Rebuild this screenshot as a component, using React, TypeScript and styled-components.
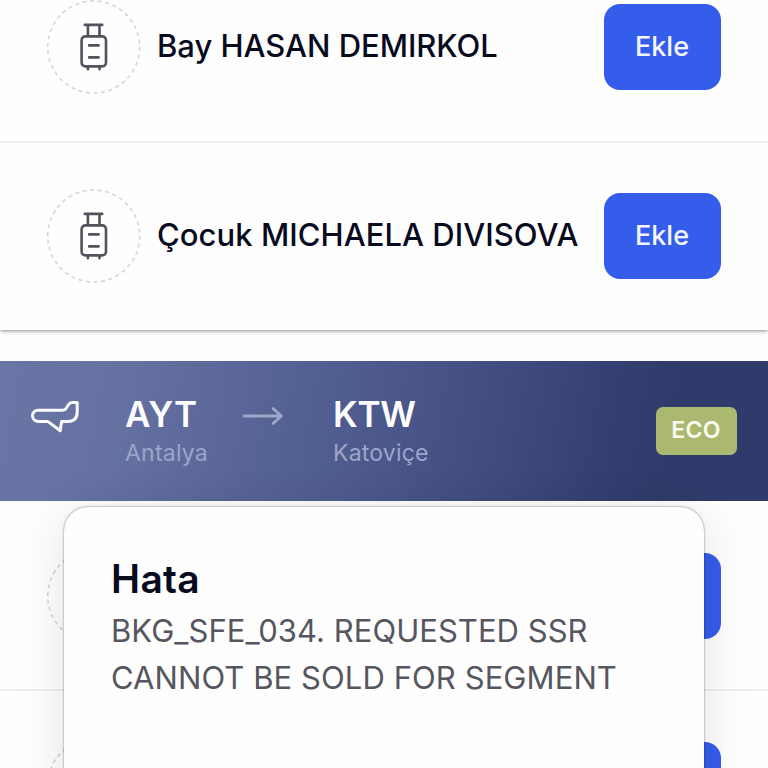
import React from "react";
import styled, { createGlobalStyle } from "styled-components";

interface TextProps {
  $spacing?: string;
}

const GlobalStyle = createGlobalStyle`
  * {
    box-sizing: border-box;
  }
  body {
    margin: 0;
    background: #fefefe;
    font-family: "Inter", "Liberation Sans", sans-serif;
    color: #080a1e;
  }
`;

const StyledPage = styled.div`
  position: relative;
  width: 768px;
  height: 768px;
  overflow: hidden;
  display: flex;
  flex-direction: column;
`;

const StyledCard = styled.section<{ $first?: boolean }>`
  flex: none;
  margin-top: ${(props) => (props.$first ? "-46px" : "1px")};
  margin-bottom: ${(props) => (props.$first ? "31px" : "0")};
  background: #fefefe;
  box-shadow: ${(props) =>
    props.$first ? "0 1px 4px rgba(0, 0, 0, 0.45)" : "none"};
`;

const StyledRow = styled.div<{ $raised?: boolean }>`
  display: flex;
  align-items: center;
  height: 187px;
  padding: 0 47px ${(props) => (props.$raised ? "2px" : "0")};

  & + & {
    height: 189px;
    border-top: 2px solid #efeff1;
  }
`;

const StyledCircle = styled.div`
  flex: none;
  width: 94px;
  height: 94px;
  position: relative;
  display: flex;
  align-items: center;
  justify-content: center;
`;

const StyledRing = styled.svg`
  position: absolute;
  inset: 0;
`;

const StyledName = styled.span<TextProps>`
  flex: 1;
  margin-left: 16px;
  margin-top: -3px;
  font-size: 31px;
  font-weight: 500;
  letter-spacing: ${(props) => props.$spacing || "0"};
  white-space: nowrap;
`;

const StyledButton = styled.button`
  flex: none;
  width: 117px;
  height: 86px;
  padding: 0 1px 1px 0;
  border: none;
  border-radius: 16px;
  background: #355deb;
  color: #f3f6ff;
  font-family: inherit;
  font-size: 27px;
  font-weight: 500;
`;

const StyledBanner = styled.header`
  flex: none;
  display: flex;
  align-items: flex-start;
  height: 140px;
  padding: 0 31px;
  background: linear-gradient(
    100deg,
    #6875a5 0%,
    #6572a2 15%,
    #4c588b 50%,
    #343f71 79%,
    #303b6b 86%,
    #303b6b 100%
  );
`;

const StyledPlane = styled.svg`
  flex: none;
  margin-top: 39px;
`;

const StyledArrow = styled.svg`
  flex: none;
  margin-top: 44px;
`;

const StyledAirport = styled.div<{ $width: number; $left: number }>`
  width: ${(props) => props.$width}px;
  margin-left: ${(props) => props.$left}px;
  margin-top: 32px;
`;

const StyledCode = styled.div<TextProps>`
  font-size: 35px;
  line-height: 42px;
  font-weight: 600;
  letter-spacing: ${(props) => props.$spacing || "0"};
  color: #fdfdff;
`;

const StyledCity = styled.div<TextProps>`
  font-size: 23px;
  line-height: 36px;
  letter-spacing: ${(props) => props.$spacing || "0"};
  color: #9ca6cb;
`;

const StyledBadge = styled.div`
  width: 81px;
  height: 48px;
  margin-left: auto;
  margin-top: 46px;
  padding: 0 1px 2px 0;
  display: flex;
  align-items: center;
  justify-content: center;
  border-radius: 7px;
  background: #aab870;
  color: #fdfdf2;
  font-size: 23px;
  font-weight: 600;
  letter-spacing: 0.3px;
`;

const StyledDialog = styled.div`
  position: absolute;
  top: 507px;
  left: 64px;
  width: 640px;
  height: 340px;
  padding: 48px 47px;
  border-radius: 24px;
  background: #fefefe;
  box-shadow: 0 0 2px rgba(0, 0, 0, 0.6), 0 6px 48px rgba(0, 0, 0, 0.11);
`;

const StyledDialogTitle = styled.h1`
  margin: 0;
  font-size: 39px;
  line-height: 48px;
  font-weight: 600;
  letter-spacing: 0.3px;
`;

const StyledDialogText = styled.p`
  margin: 4px 0 0;
  font-size: 31px;
  line-height: 47px;
  color: #55565f;
`;

const StyledLine = styled.span<TextProps>`
  display: block;
  white-space: nowrap;
  letter-spacing: ${(props) => props.$spacing || "0"};
`;

const Luggage = () => (
  <StyledCircle>
    <StyledRing width="94" height="94" viewBox="0 0 94 94" fill="none">
      <circle
        cx="46.7"
        cy="47"
        r="46"
        stroke="#d6d6d9"
        strokeWidth="1.6"
        strokeDasharray="4 3.6"
      />
    </StyledRing>
    <svg
      width="32"
      height="48"
      viewBox="0 0 32 48"
      fill="none"
      stroke="#51525d"
      strokeWidth="2.6"
      strokeLinecap="round"
    >
      <path d="M6.8 1.9h17.4M9.9 2V13M21.5 2V13" />
      <rect x="3.6" y="13.4" width="24.4" height="30" rx="3.8" />
      <path d="M11.2 22.4h9.4M11.2 34.4h9.4M9.9 44.4v1.9M21.5 44.4v1.9" />
    </svg>
  </StyledCircle>
);

interface PassengerProps {
  name?: string;
  action?: string;
  raised?: boolean;
  spacing?: string;
}

const Passenger: React.FC<PassengerProps> = ({
  name,
  action,
  raised,
  spacing,
}) => (
  <StyledRow $raised={raised}>
    <Luggage />
    <StyledName $spacing={spacing}>{name}</StyledName>
    <StyledButton>{action}</StyledButton>
  </StyledRow>
);

export default function App() {
  return (
    <>
      <GlobalStyle />
      <StyledPage>
        <StyledCard $first>
          <Passenger
            name="Bay HASAN DEMIRKOL"
            action="Ekle"
            raised
            spacing="-0.04px"
          />
          <Passenger
            name="Çocuk MICHAELA DIVISOVA"
            action="Ekle"
            raised
            spacing="0.05px"
          />
        </StyledCard>
        <StyledBanner>
          <StyledPlane
            width="49"
            height="34"
            viewBox="0 0 49 34"
            fill="none"
            stroke="#fafbff"
            strokeWidth="3"
            strokeLinejoin="round"
          >
            <path d="M7 10.2H31.6Q34 10.2 35.2 8.2L37.5 4.7Q38.8 2.6 41.2 2.6H46.2V12Q46.2 21.4 36.8 21.4H30.6L29.2 30.8L17.4 21.9Q16.8 21.4 15.8 21.4H7A5.5 5.6 0 0 1 7 10.2Z" />
          </StyledPlane>
          <StyledAirport $left={45} $width={117}>
            <StyledCode $spacing="0.4px">AYT</StyledCode>
            <StyledCity $spacing="0.22px">Antalya</StyledCity>
          </StyledAirport>
          <StyledArrow
            width="42"
            height="22"
            viewBox="0 0 42 22"
            fill="none"
            stroke="#9ca6cb"
            strokeWidth="2.8"
            strokeLinecap="round"
            strokeLinejoin="round"
          >
            <path d="M2 11H39M31.2 3.6L39.4 11L31.2 18.4" />
          </StyledArrow>
          <StyledAirport $left={49} $width={117}>
            <StyledCode $spacing="-0.2px">KTW</StyledCode>
            <StyledCity $spacing="0.2px">Katoviçe</StyledCity>
          </StyledAirport>
          <StyledBadge>ECO</StyledBadge>
        </StyledBanner>
        <StyledCard>
          <Passenger />
          <Passenger />
        </StyledCard>
        <StyledDialog role="alertdialog">
          <StyledDialogTitle>Hata</StyledDialogTitle>
          <StyledDialogText>
            <StyledLine $spacing="0.04px">BKG_SFE_034. REQUESTED SSR</StyledLine>
            <StyledLine $spacing="0.08px">CANNOT BE SOLD FOR SEGMENT</StyledLine>
          </StyledDialogText>
        </StyledDialog>
      </StyledPage>
    </>
  );
}
